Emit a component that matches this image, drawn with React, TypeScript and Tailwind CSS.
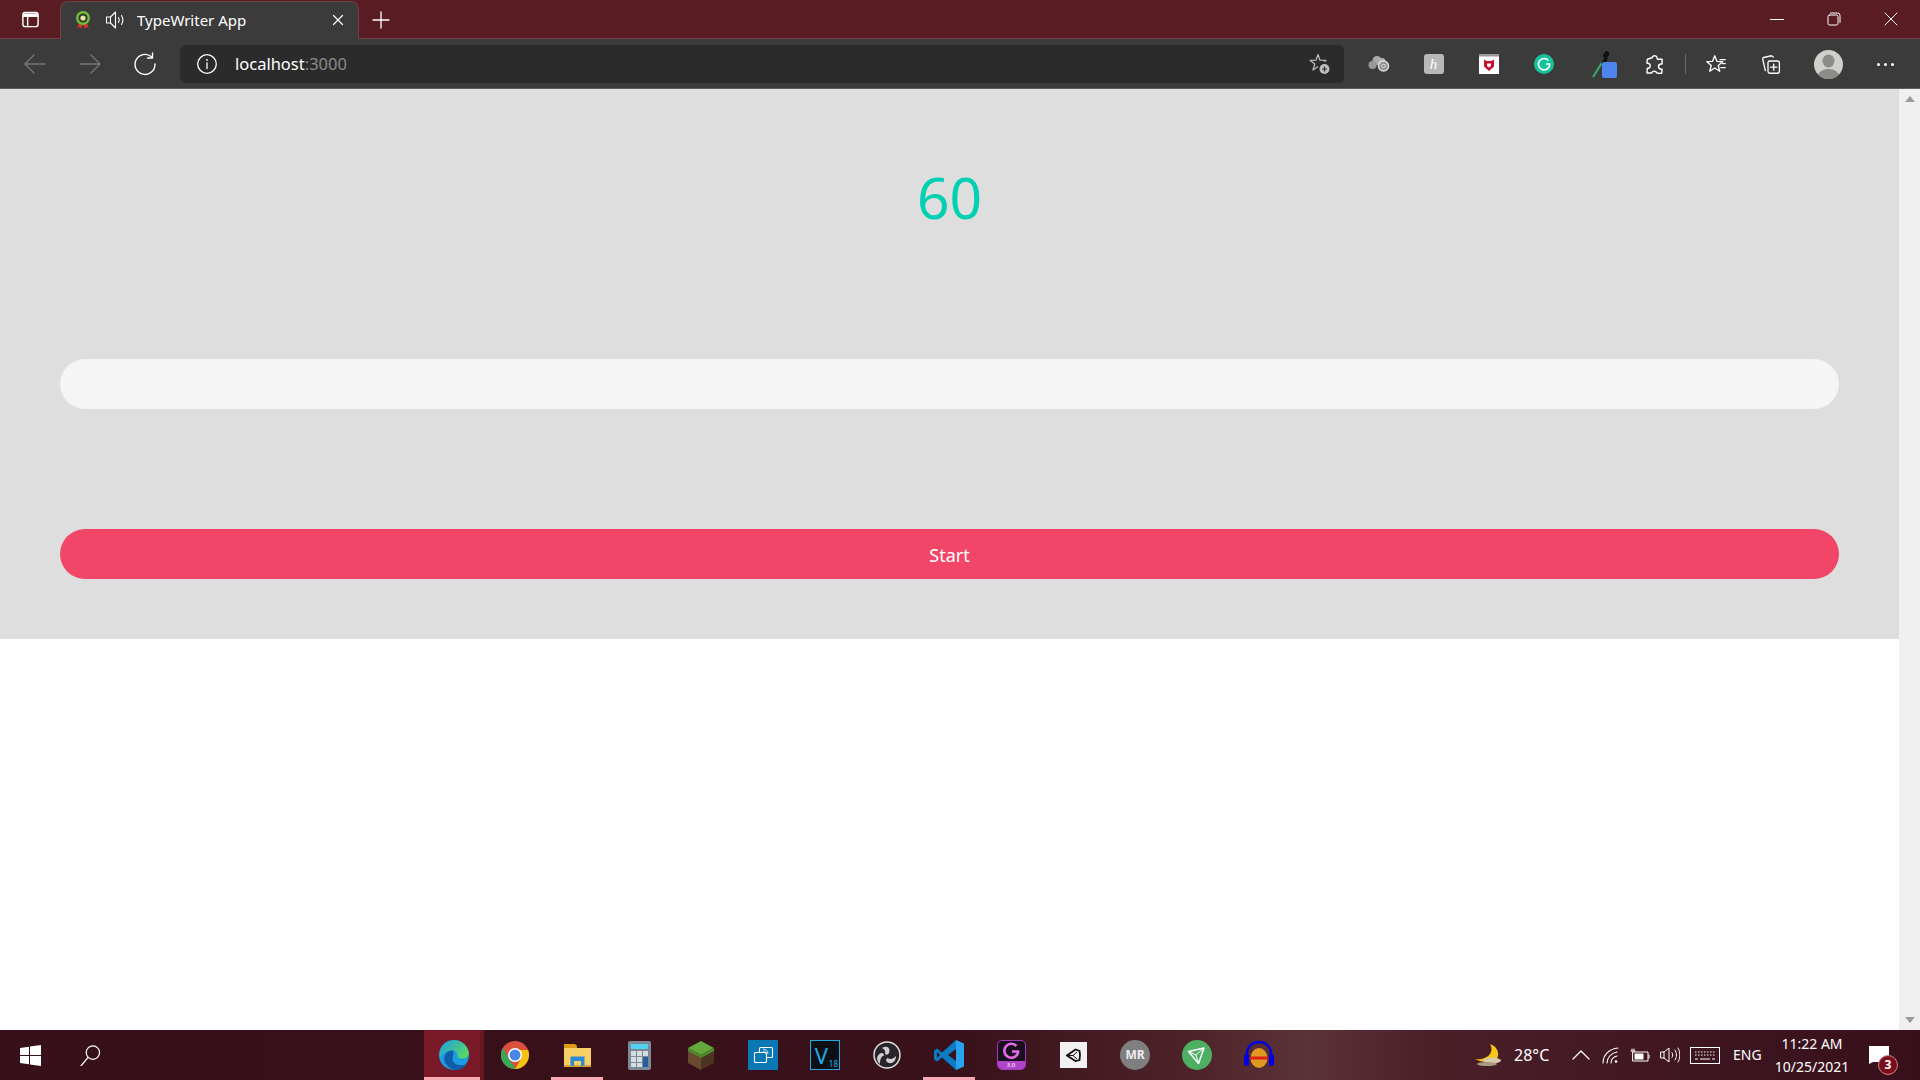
import { ReactNode } from 'react';

const font = { fontFamily: '"Noto Sans", "Open Sans", sans-serif' };

function Slot({ className, children }: { className: string; children: ReactNode }) {
  return <div className={`flex shrink-0 items-center justify-center ${className}`}>{children}</div>;
}

function Line({ w = 24, h = 24, size, sw = 1.4, color = '#fff', children }: { w?: number; h?: number; size?: number; sw?: number; color?: string; children: ReactNode }) {
  return (
    <svg width={size ?? w} height={size ? (size * h) / w : h} viewBox={`0 0 ${w} ${h}`} fill="none" stroke={color} strokeWidth={sw} strokeLinecap="round" strokeLinejoin="round">
      {children}
    </svg>
  );
}

function TabStrip() {
  return (
    <div className="flex h-[39px] shrink-0 border-b border-[#7a4048] bg-[#5a1c23]">
      <Slot className="w-[60px] h-[38px]">
        <Line w={20} h={20} size={19} sw={1.5}>
          <rect x="2" y="2.500" width="16" height="15" rx="2.500" />
          <path d="M2 6.500h16M7 6.500v11" />
          <path d="M2.500 3.500h15v3h-15z" fill="#fff" stroke="none" />
        </Line>
      </Slot>
      <div className="mt-px -mb-px flex h-[38px] w-[299px] items-center rounded-t-lg border-x border-t border-[#6e4247] bg-[#3b3b3b] pb-px text-white">
        <Slot className="ml-[11px] w-[22px]">
          <svg width="16" height="20" viewBox="0 0 16 20">
            <path d="M4 13l-2 5 3-1 1 2 2-5zM12 13l2 5-3-1-1 2-2-5z" fill="#d8322b" />
            <circle cx="8" cy="8" r="7" fill="#6fbf3a" />
            <circle cx="8" cy="8" r="4.600" fill="#2f3a2a" />
            <circle cx="8" cy="8" r="2.600" fill="#e8e0a8" />
          </svg>
        </Slot>
        <Slot className="ml-[11px] w-[22px]">
          <Line w={22} h={20} sw={1.100}>
            <path d="M1.500 7h4l5-5v16l-5-5h-4zM5.500 7v6" />
            <path d="M13.500 7.500c1 1.500 1 3.500 0 5M16.500 5.500c1.700 2.800 1.700 6.200 0 9" />
          </Line>
        </Slot>
        <span className="ml-[10px] flex-1 text-[15px] leading-none">TypeWriter App</span>
        <Slot className="mr-[12px] w-[16px]">
          <Line w={12} h={12} sw={1.200}>
            <path d="M1.500 1.500l9 9M10.500 1.500l-9 9" />
          </Line>
        </Slot>
      </div>
      <Slot className="ml-[4px] w-[36px] h-[40px]">
        <Line w={18} h={18} sw={1.300}>
          <path d="M9 1v16M1 9h16" />
        </Line>
      </Slot>
      <div className="flex-1" />
      <Slot className="w-[57px] h-[38px]">
        <div className="h-px w-[14px] bg-white" />
      </Slot>
      <Slot className="w-[57px] h-[38px]">
        <Line w={14} h={14} sw={1}>
          <rect x="1" y="3" width="10" height="10" rx="1.500" />
          <path d="M3.500 1h7a2.500 2.500 0 0 1 2.500 2.500v7" />
        </Line>
      </Slot>
      <Slot className="w-[58px] h-[38px]">
        <Line w={14} h={14} sw={1}>
          <path d="M1 1l12 12M13 1L1 13" />
        </Line>
      </Slot>
    </div>
  );
}

function Toolbar() {
  return (
    <div className="flex h-[50px] shrink-0 items-center border-b border-[#5e5e5e] bg-[#3b3b3b] pt-px">
      <Slot className="ml-[12px] w-[45px]">
        <Line sw={1.300} color="#777">
          <path d="M22 12H2M11 3l-9 9 9 9" />
        </Line>
      </Slot>
      <Slot className="ml-[10px] w-[45px]">
        <Line sw={1.300} color="#777">
          <path d="M2 12h20M13 3l9 9-9 9" />
        </Line>
      </Slot>
      <Slot className="ml-[10px] w-[45px]">
        <Line sw={1.400}>
          <path d="M18.500 4.800A10 10 0 1 0 22 12" />
          <path d="M19.500 1v5h-5" />
        </Line>
      </Slot>
      <div className="ml-[13px] flex h-[38px] w-[1164px] items-center rounded-md bg-[#2b2b2b]">
        <Slot className="ml-[16px] w-[22px]">
          <Line w={20} h={20} sw={1.300}>
            <circle cx="10" cy="10" r="9.300" />
            <path d="M10 9v5.500M10 5.500v1" />
          </Line>
        </Slot>
        <span className="ml-[17px] flex-1 text-[16.500px] leading-none text-white">
          localhost<span className="text-[#8a8a8a]">:3000</span>
        </span>
        <Slot className="mr-[12px] w-[26px]">
          <svg width="24" height="24" viewBox="0 0 24 24" fill="none" stroke="#bdbdbd" strokeWidth="1.200">
            <path d="M11 14.500l-5 3.500 1.800-6L3 8.300l6-.1L11 2.500l2 5.700 6 .1-1.500 1.300" strokeLinejoin="round" />
            <circle cx="17.500" cy="17" r="5" fill="#bdbdbd" stroke="none" />
            <path d="M17.500 14.500v5M15 17h5" stroke="#2b2b2b" />
          </svg>
        </Slot>
      </div>
      <Slot className="ml-[12px] w-[45px]">
        <svg width="22" height="20" viewBox="0 0 22 20" fill="none">
          <circle cx="9" cy="6.500" r="4.500" fill="#a9a9a9" />
          <circle cx="4.500" cy="11" r="4" fill="#999" />
          <circle cx="14" cy="7.500" r="3.500" fill="#b5b5b5" />
          <circle cx="15.500" cy="12" r="5" fill="#8f8f8f" stroke="#ddd" strokeWidth="1.500" />
          <circle cx="15.500" cy="12" r="1.800" stroke="#ddd" />
        </svg>
      </Slot>
      <Slot className="ml-[10px] w-[45px]">
        <div className="flex h-[20px] w-[20px] items-center justify-center rounded-[3px] bg-[#b8b8b8] text-[15px] italic leading-none text-white" style={{ fontFamily: '"Liberation Serif", serif' }}>
          h
        </div>
      </Slot>
      <Slot className="ml-[10px] w-[45px]">
        <svg width="20" height="20" viewBox="0 0 20 20">
          <rect width="20" height="20" fill="#fff" />
          <rect width="20" height="2.500" fill="#9a9a9a" />
          <path d="M5 5.500l2.500 1.500h5L15 5.500v7L10 17l-5-4.500z" fill="#c8102e" />
          <path d="M8 9.500h4v2.500l-2 1.500L8 12z" fill="#fff" />
        </svg>
      </Slot>
      <Slot className="ml-[10px] w-[45px]">
        <svg width="20" height="20" viewBox="0 0 20 20">
          <circle cx="10" cy="10" r="10" fill="#15c39a" />
          <path d="M14.500 6.500A5.700 5.700 0 1 0 15.500 12V10h-3.500" fill="none" stroke="#fff" strokeWidth="1.600" />
        </svg>
      </Slot>
      <Slot className="ml-[16px] w-[45px]">
        <svg width="26" height="28" viewBox="0 0 26 28">
          <path d="M1 27L11 11" stroke="#3aa86b" strokeWidth="2" />
          <path d="M9 13l4-6 3 2-4 6z" fill="#111" />
          <rect x="12" y="1" width="5" height="7" rx="2" fill="#111" transform="rotate(35 14 4)" />
          <rect x="10" y="12" width="15" height="16" rx="2" fill="#4d84f0" />
        </svg>
      </Slot>
      <Slot className="ml-[5px] w-[45px]">
        <Line w={20} h={22} size={19} sw={1.500}>
          <path d="M7.500 4a2.700 2.700 0 0 1 5.300 0L13 5.500h5v5h-1.500a2.800 2.800 0 0 0 0 5.500H18l-.5 4.500-5-.5a3 3 0 0 0-5.500 0L2 20l.5-5H4a2.800 2.800 0 0 0 0-5L2 9.500l.5-4z" />
        </Line>
      </Slot>
      <div className="ml-[8px] h-[20px] w-px bg-[#6b6b6b]" />
      <Slot className="ml-[10px] w-[40px]">
        <Line size={21} sw={1.500}>
          <path d="M10 2l2.600 6.500 6.400.3-5 4.300 1.700 6.600L10 16l-5.700 3.700L6 13.100 1 8.800l6.400-.3z" />
          <path d="M16 6.500h6M19 11h3M17 15.500h5" />
        </Line>
      </Slot>
      <Slot className="ml-[15px] w-[40px]">
        <Line size={21} sw={1.500}>
          <path d="M14 3.500L12 2 3 4c-1 .3-1.200 1-1 2l3 13" />
          <rect x="8" y="8" width="13" height="14" rx="2" />
          <path d="M14.500 11.500v7M11 15h7" />
        </Line>
      </Slot>
      <Slot className="ml-[17px] w-[40px]">
        <svg width="29" height="29" viewBox="0 0 29 29">
          <defs>
            <clipPath id="avatar">
              <circle cx="14.500" cy="14.500" r="14.500" />
            </clipPath>
          </defs>
          <circle cx="14.500" cy="14.500" r="14.500" fill="#cfcfcb" />
          <g clipPath="url(#avatar)" fill="#8b8b87">
            <ellipse cx="14.500" cy="11" rx="6" ry="6.500" />
            <ellipse cx="14.500" cy="27" rx="11" ry="8" />
          </g>
        </svg>
      </Slot>
      <Slot className="ml-[17px] w-[40px]">
        <div className="flex gap-[4px]">
          <div className="h-[3px] w-[3px] rounded-full bg-white" />
          <div className="h-[3px] w-[3px] rounded-full bg-white" />
          <div className="h-[3px] w-[3px] rounded-full bg-white" />
        </div>
      </Slot>
    </div>
  );
}

function Scrollbar() {
  return (
    <div className="flex w-[21px] shrink-0 flex-col items-center justify-between bg-[#f0f0f0] py-[7px]">
      <div className="h-0 w-0 border-x-[5px] border-b-[6px] border-x-transparent border-b-[#9a9a9a]" />
      <div className="h-0 w-0 border-x-[5px] border-t-[6px] border-x-transparent border-t-[#9a9a9a]" />
    </div>
  );
}

function TypeWriter() {
  return (
    <div className="flex h-[550px] flex-col bg-[#dedede] px-[60px]">
      <h1 className="mt-[67px] h-[82px] text-center text-[57px] font-normal leading-[82px] text-[#00d1b2]">60</h1>
      <input className="mt-[121px] h-[50px] w-full rounded-full bg-[#f5f5f5] px-6 outline-none" />
      <button className="mt-[120px] h-[50px] w-full rounded-full bg-[#f14668] pt-[2px] text-[18px] text-white">Start</button>
    </div>
  );
}

const windowsLogo = (
  <svg width="21" height="21" viewBox="0 0 21 21" fill="#fff">
    <path d="M0 3l9-1.300V10H0zM10 1.500L21 0v10H10zM0 11h9v8.300L0 18zM10 11h11v10l-11-1.500z" />
  </svg>
);

const appIcons: ReactNode[] = [
  <svg key="edge" width="30" height="30" viewBox="0 0 30 30">
    <defs>
      <linearGradient id="edgeTop" x1="0" y1="0" x2="1" y2="0.600">
        <stop offset="0" stopColor="#1b9de2" />
        <stop offset="1" stopColor="#55d769" />
      </linearGradient>
    </defs>
    <circle cx="15" cy="15" r="15" fill="#1b9de2" />
    <path d="M4 5C10-2 25-2 29.500 11c1 4.500-1.500 7-5 7.500-3 .3-6-.5-6-2.500 1-3-2-6-6.500-5.500C7 11 3 14 1 18 0 13 1 8 4 5z" fill="url(#edgeTop)" />
    <path d="M13 10.500C7 11 4.500 16 5.500 21c1.500 6 8.500 10 15 8.500 3-.8 5.500-2.700 7-5.500-4 2-10 1.500-12.500-1.500-2.500-3.500-1-7-.5-9 .2-1.500 0-3-1.500-3z" fill="#0f5da8" />
  </svg>,
  <svg key="chrome" width="28" height="28" viewBox="0 0 28 28">
    <circle cx="14" cy="14" r="14" fill="#d9503f" />
    <path d="M14 28C6.300 28 0 21.700 0 14c0-2.600.7-5 2-7l7 12.500 6 8.400z" fill="#3aa757" />
    <path d="M14 28c7.700 0 14-6.300 14-14 0-2-.4-3.500-1-5H14l5 10.500z" fill="#f4c20d" />
    <circle cx="14" cy="14" r="7" fill="#fff" />
    <circle cx="14" cy="14" r="5.500" fill="#4a86e8" />
  </svg>,
  <svg key="files" width="27" height="23" viewBox="0 0 27 23">
    <path d="M0 2h11l2 2h14v19H0z" fill="#f6cf66" />
    <path d="M0 0h11l2 2v2H0z" fill="#dc9c14" />
    <path d="M0 21h27v2H0z" fill="#d9a531" />
    <path d="M6.500 22V12.500h14V22h-3.500v-5h-7v5z" fill="#2f8ad4" />
  </svg>,
  <svg key="calc" width="23" height="29" viewBox="0 0 23 29">
    <rect width="23" height="29" rx="2" fill="#7d8a96" />
    <rect x="3" y="3" width="17" height="5" fill="#4fd2f2" />
    <path d="M3 10h5v5H3zM9 10h5v5H9zM3 16h5v5H3zM9 16h5v5H9zM3 22h5v4H3zM9 22h5v4H9zM15 10h5v5h-5z" fill="#d5dde2" />
    <path d="M15 16h5v10h-5z" fill="#24609c" />
  </svg>,
  <svg key="mc" width="26" height="29" viewBox="0 0 26 29">
    <path d="M13 0l13 7-13 7L0 7z" fill="#65a83a" />
    <path d="M0 7l13 7v15L0 22z" fill="#6a4a2e" />
    <path d="M26 7l-13 7v15l13-7z" fill="#4b3522" />
    <path d="M0 7l13 7 13-7v3l-13 7-13-7z" fill="#4f8a2c" />
  </svg>,
  <svg key="connect" width="30" height="30" viewBox="0 0 30 30" fill="none" stroke="#fff" strokeWidth="1.100">
    <rect width="30" height="30" fill="#0a78b4" stroke="none" />
    <rect x="11.500" y="7.500" width="13" height="10" rx="1" fill="#0a78b4" />
    <rect x="6.500" y="12.500" width="12" height="10" rx="1" fill="#0a78b4" />
    <path d="M15 11c2 0 3 1 3 3M15 9c3 0 5 2 5 5" strokeWidth=".8" />
  </svg>,
  <div key="vegas" className="flex h-[30px] w-[30px] items-end justify-end border border-[#29a8e0] bg-[#0d1116] text-[#29a8e0]">
    <span className="mb-[3px] mr-[1px] text-[22px] leading-none">V</span>
    <span className="mr-px text-[8px] leading-[10px]">18</span>
  </div>,
  <svg key="obs" width="28" height="28" viewBox="0 0 28 28" fill="none">
    <circle cx="14" cy="14" r="13" fill="#28242a" stroke="#ddd" strokeWidth="1.500" />
    <path d="M9 7c5-3 9 0 7 5-1 2-3 2-4 1 1-3-1-5-3-6zM23 15c0 6-5 9-9 6-1.500-1.500-1-3.500.5-4 2.500 2 6 1 8.500-2zM7 23c-4-3-4-9 1-11 2-.5 3 1 3 2.500-3 1-4 4-4 8.500z" fill="#cfcfcf" />
  </svg>,
  <svg key="vscode" width="30" height="30" viewBox="0 0 30 30">
    <path d="M22 0L8 12.500 3 8.500 0 10.500v9l3 2 5-4L22 30z" fill="#0a7cc4" />
    <path d="M22 0l8 3.500v23L22 30z" fill="#2aa3ee" />
    <path d="M22 9l-8 6 8 6z" fill="#3b1119" />
    <path d="M3 12v6l3-3z" fill="#3b1119" />
  </svg>,
  <div key="g" className="flex h-[30px] w-[29px] flex-col items-center justify-between rounded-[5px] border border-[#a43bbd] bg-[#1a0f1e]">
    <svg width="20" height="20" viewBox="0 0 20 20" fill="none" stroke="#e66be8" strokeWidth="2.600">
      <path d="M15.500 5A7 7 0 1 0 17 12V10.500h-6" />
    </svg>
    <span className="h-[8px] w-full rounded-b-[4px] bg-[#b044c8] text-center text-[6px] leading-[8px] text-white">3.0</span>
  </div>,
  <div key="unity" className="flex h-[26px] w-[27px] items-center justify-center bg-[#f2f2f2]">
    <svg width="15" height="15" viewBox="0 0 15 15" fill="none" stroke="#111" strokeWidth="1.800" strokeLinejoin="miter">
      <path d="M9.500 1.500l4 1.500.5 4-.5 5-4 1L1 7.500z" />
      <path d="M1 7.500h6l4-3.500M7 7.500l4 3.500" strokeWidth="1" />
    </svg>
  </div>,
  <div key="mr" className="flex h-[30px] w-[30px] items-center justify-center rounded-full bg-[#7f7f7f] text-[12px] font-bold leading-none text-[#eee]">
    MR
  </div>,
  <svg key="proton" width="30" height="30" viewBox="0 0 30 30" fill="none" stroke="#fff" strokeWidth="1.500" strokeLinejoin="round">
    <circle cx="15" cy="15" r="15" fill="#4caf62" stroke="none" />
    <path d="M6.500 11.500L22 8l-5.500 15.500z" />
    <path d="M6.500 11.500L14 15l8-7M14 15l2.500 8.500" strokeWidth="1" />
  </svg>,
  <svg key="aud" width="30" height="30" viewBox="0 0 30 30" fill="none">
    <path d="M3 20V14C3 7 8 2 15 2s12 5 12 12v6" stroke="#0000e0" strokeWidth="2.500" />
    <rect x="0" y="14" width="5" height="12" rx="2.500" fill="#0000e0" />
    <rect x="25" y="14" width="5" height="12" rx="2.500" fill="#0000e0" />
    <ellipse cx="15" cy="18" rx="8.500" ry="10" fill="#e09a22" />
    <path d="M6 18h18" stroke="#e0201c" strokeWidth="3" />
  </svg>,
];

function Tray() {
  return (
    <div className="flex h-full items-center text-white">
      <Slot className="w-[36px]">
        <svg width="30" height="24" viewBox="0 0 30 24">
          <path d="M16 1c6 2 9 7 8 12-1 4-5 6-10 6-5 0-10-1-13-3 6 1 12-1 15-5 2-3 2-7 0-10z" fill="#f5c518" />
          <ellipse cx="18" cy="17.500" rx="9" ry="3" fill="#d8c9a8" />
          <ellipse cx="13" cy="21" rx="10" ry="2" fill="#a8987e" />
        </svg>
      </Slot>
      <span className="ml-[7px] w-[37px] whitespace-nowrap text-[16px] leading-none">28°C</span>
      <Slot className="ml-[18px] w-[24px]">
        <Line w={18} h={10} sw={1.200}>
          <path d="M1 9l8-8 8 8" />
        </Line>
      </Slot>
      <Slot className="ml-[6px] w-[24px]">
        <Line w={18} h={17} sw={1.100}>
          <path d="M1 16C1 8 7 2 16 1M5 16c0-5 4-10 10-11M9 16c0-3 2-6 6-7" />
          <circle cx="14" cy="14.500" r="1.300" fill="#fff" stroke="none" />
        </Line>
      </Slot>
      <Slot className="ml-[5px] w-[24px]">
        <Line w={20} h={14} sw={1}>
          <rect x="3" y="4" width="15" height="9" />
          <path d="M4.500 5.500h9v6h-9z" fill="#fff" stroke="none" />
          <path d="M1 3h4M2 1v2M4 1v2" />
          <path d="M19 7v3" />
        </Line>
      </Slot>
      <Slot className="ml-[6px] w-[24px]">
        <Line w={20} h={18} sw={1}>
          <path d="M1 6h3l5-4v14l-5-4H1zM4 6v6" />
          <path d="M12 6.500c1 1.500 1 3.500 0 5M15 4c2 3 2 7 0 10M18 2c2.500 4 2.500 10 0 14" />
        </Line>
      </Slot>
      <Slot className="ml-[8px] w-[30px]">
        <svg width="30" height="17" viewBox="0 0 30 17" fill="none" stroke="#fff">
          <rect x=".5" y=".5" width="29" height="16" />
          <path d="M5 5h20M5 8h20" strokeDasharray="1.500 1.500" />
          <path d="M5 12h3M10 12h10M22 12h3" />
        </svg>
      </Slot>
      <span className="ml-[13px] w-[29px] text-[14px] leading-none">ENG</span>
      <div className="ml-[13px] flex w-[74px] flex-col items-center text-[14px] leading-[23px]">
        <span className="whitespace-nowrap">11:22 AM</span>
        <span className="whitespace-nowrap">10/25/2021</span>
      </div>
      <div className="relative ml-[20px] flex w-[51px] items-center">
        <svg width="20" height="18" viewBox="0 0 20 18" fill="#fff">
          <path d="M0 0h20v16H4l-4 2z" />
        </svg>
        <span className="absolute left-[9px] top-[9px] flex h-[20px] w-[20px] items-center justify-center rounded-full border border-[#c9868d] bg-[#7a0f1c] text-[12px] font-bold leading-none">
          3
        </span>
      </div>
    </div>
  );
}

function Taskbar() {
  return (
    <div className="flex h-[50px] shrink-0 items-center bg-[linear-gradient(90deg,#37101a_0%,#38111a_50%,#4d2329_62%,#5a3338_68%,#4a1f28_75%,#3d1520_90%,#37101a_100%)]">
      <Slot className="w-[60px] h-full">{windowsLogo}</Slot>
      <Slot className="w-[60px] h-full">
        <Line w={22} h={24} size={21} sw={1.300}>
          <circle cx="13.500" cy="9" r="7" />
          <path d="M8.500 14L1 23" />
        </Line>
      </Slot>
      <div className="ml-[304px] flex h-full">
        {appIcons.map((icon, i) => (
          <div
            key={i}
            className={
              i === 0
                ? 'relative flex h-full w-[60px] items-center justify-center border-r-4 border-r-[#6a1823] bg-[#7a1a28] pl-[4px]'
                : 'relative flex h-full w-[62px] items-center justify-center'
            }
          >
            {icon}
            {i === 0 && <div className="absolute inset-x-0 bottom-0 h-[3px] bg-[#f8aab4]" />}
            {(i === 2 || i === 8) && <div className="absolute inset-x-[5px] bottom-0 h-[3px] bg-[#f8aab4]" />}
          </div>
        ))}
      </div>
      <div className="flex-1" />
      <Tray />
    </div>
  );
}

export default function App() {
  return (
    <div className="flex h-screen w-full flex-col overflow-hidden" style={font}>
      <TabStrip />
      <Toolbar />
      <div className="flex flex-1 bg-white">
        <div className="flex-1">
          <TypeWriter />
        </div>
        <Scrollbar />
      </div>
      <Taskbar />
    </div>
  );
}
